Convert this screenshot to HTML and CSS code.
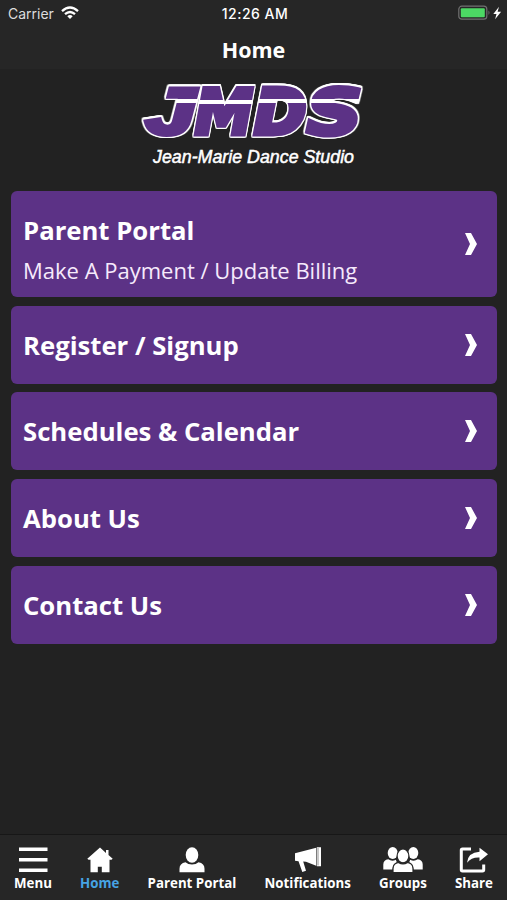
FILE: index.html
```html
<!DOCTYPE html>
<html lang="en">
<head>
<meta charset="utf-8">
<title>Home</title>
<link rel="stylesheet" href="styles.css">
</head>
<body>
<div class="status">
  <div class="carrier"><span>Carrier</span>
    <svg width="18" height="14" viewBox="0 0 18 14" fill="none" stroke="#fff" stroke-width="2.3"><path d="M1 5.1Q9-2.1 17 5.1M4 8.2Q9 3.8 14 8.2"/><path d="M9 13L6.300 10.200Q9 8 11.700 10.200Z" fill="#fff" stroke="none"/></svg>
  </div>
  <span class="time">12:26 AM</span>
  <div class="power">
    <svg width="44" height="16" viewBox="0 0 44 16"><rect x=".8" y="1.200" width="28" height="13" rx="3" fill="none" stroke="#717171" stroke-width="1.200"/><rect x="2.800" y="3.200" width="24" height="9" rx="1" fill="#4cd964"/><path d="M30.500 5.500q2 2.200 0 4.500z" fill="#717171"/><path d="M41 1.800L35.300 8.900h3.200l-1.400 5.400 6-7.500h-3.500z" fill="#fff"/></svg>
  </div>
</div>
<header class="title">Home</header>
<div class="logo">
  <svg width="240" height="96" viewBox="135 75 240 96">
    <defs><linearGradient id="band" gradientUnits="userSpaceOnUse" x1="0" y1="-50" x2="0" y2="0"><stop offset=".31" stop-color="#5c3286"/><stop offset=".31" stop-color="#fff"/><stop offset=".39" stop-color="#fff"/><stop offset=".39" stop-color="#5c3286"/></linearGradient></defs>
    <g class="mark" fill="url(#band)" stroke="url(#band)">
      <text class="hook" transform="translate(146 134) scale(1.350 1)">J</text>
      <text transform="translate(195 134) scale(.94 1)">M</text>
      <text transform="translate(254 134) scale(1.020 1)">D</text>
      <text transform="translate(307 134) scale(1.230 1)">S</text>
    </g>
    <text class="studio" x="153" y="162.500" textLength="201" lengthAdjust="spacingAndGlyphs">Jean-Marie Dance Studio</text>
  </svg>
</div>
<main class="cards">
  <a class="card tall"><div><h2>Parent Portal</h2><p>Make A Payment / Update Billing</p></div><svg class="chev" viewBox="0 0 12 22"><path d="M0 0h6l6 11-6 11H0l5-11z"/></svg></a>
  <a class="card"><h2>Register / Signup</h2><svg class="chev" viewBox="0 0 12 22"><path d="M0 0h6l6 11-6 11H0l5-11z"/></svg></a>
  <a class="card"><h2>Schedules &amp; Calendar</h2><svg class="chev" viewBox="0 0 12 22"><path d="M0 0h6l6 11-6 11H0l5-11z"/></svg></a>
  <a class="card"><h2>About Us</h2><svg class="chev" viewBox="0 0 12 22"><path d="M0 0h6l6 11-6 11H0l5-11z"/></svg></a>
  <a class="card"><h2>Contact Us</h2><svg class="chev" viewBox="0 0 12 22"><path d="M0 0h6l6 11-6 11H0l5-11z"/></svg></a>
</main>
<nav class="tabs">
  <a class="tab"><svg width="30" height="26" viewBox="0 0 30 26"><path d="M1 .5h28.500v3.600H1zM1 11h28.500v3.600H1zM1 21.500h28.500v3.600H1z"/></svg><span>Menu</span></a>
  <a class="tab active"><svg width="26" height="26" viewBox="0 0 26 26"><path d="M13 .5L.3 11.800l1.200 1H3.500V25.300h7.300v-5.500h4v5.500h7.700V12.800h2l1.200-1-4.200-3.700V3h-2.500v3z"/></svg><span>Home</span></a>
  <a class="tab"><svg width="26" height="26" viewBox="0 0 26 26"><ellipse cx="13" cy="8" rx="6.300" ry="7.700"/><path d="M.5 25.300v-3.500q0-5.500 6-6.500 2.500 2.200 6.500 2.200t6.500-2.200q6 1 6 6.500v3.500z"/></svg><span>Parent Portal</span></a>
  <a class="tab"><svg width="28" height="26" viewBox="0 0 28 26"><path d="M1 6.200L22.200 .8v18L12 14.800 9.200 14.500 12 23.700l-3.700 1.400L4.500 14.300 1 13.800zM22.800 .3h4.200v19h-4.200z"/><path d="M24 1v17.500" stroke="#777" stroke-width=".8"/></svg><span>Notifications</span></a>
  <a class="tab"><svg width="40" height="26" viewBox="0 0 40 26"><ellipse cx="9.700" cy="6" rx="5" ry="6"/><ellipse cx="30.300" cy="6" rx="5" ry="6"/><path d="M.3 22.500v-5q0-4.500 5-5.200 3.500 2.500 7.500 .5l1 2.500q-4 1.500-4.300 7.200zM39.700 22.500v-5q0-4.500-5-5.200-3.500 2.500-7.500 .5l-1 2.500q4 1.500 4.300 7.200z"/><ellipse class="cut" cx="20" cy="8.900" rx="5.900" ry="6.900"/><path class="cut" d="M10 25.700v-3.900q0-5.500 5.500-6.300 4.500 3 9 0 5.500 .8 5.500 6.300v3.900z"/></svg><span>Groups</span></a>
  <a class="tab"><svg width="30" height="26" viewBox="0 0 30 26"><path d="M12 1.900H3.500q-1.200 0-1.200 1.200v19.600q0 1.200 1.200 1.200h20q1.200 0 1.200-1.200V17.500" fill="none" stroke="#fff" stroke-width="3"/><path d="M8 15.800Q9 5.300 20.500 4.800V.8L29 7.300l-8.500 7V10.500Q12.500 10 8 15.800z"/></svg><span>Share</span></a>
</nav>
</body>
</html>
```
FILE: styles.css
```css
* { box-sizing: border-box; margin: 0; padding: 0; }
body {
  height: 900px;
  display: flex;
  flex-direction: column;
  overflow: hidden;
  background: #222;
  color: #fff;
  font-family: "Open Sans", sans-serif;
  white-space: nowrap;
}
svg { display: block; flex: none; overflow: visible; }
.status {
  height: 28px;
  flex: none;
  display: grid;
  grid-template-columns: 1fr auto 1fr;
  align-items: center;
  padding: 0 5px 2px 8px;
  background: #262626;
  font: 14px Inter, sans-serif;
}
.carrier { display: flex; align-items: center; gap: 7px; color: #ddd; }
.time { font-weight: 500; letter-spacing: .5px; }
.power { justify-self: end; }
.title {
  height: 41px;
  flex: none;
  line-height: 44px;
  text-align: center;
  font-weight: 700;
  font-size: 21.500px;
  background: #262626;
}
.logo { height: 122px; flex: none; padding: 6px 0 0 135px; }
.mark text {
  font: italic 700 62px "DejaVu Sans", sans-serif;
  stroke-width: 5px;
  filter: drop-shadow(1px 0 0 #fff) drop-shadow(-1px 0 0 #fff) drop-shadow(0 1.200px 0 #fff) drop-shadow(0 -1.200px 0 #fff);
}
.mark .hook { font: italic 700 65px "Liberation Sans", sans-serif; }
.studio {
  font: italic 400 18px "Liberation Sans", sans-serif;
  fill: #fff;
  stroke: #fff;
  stroke-width: .5px;
}
.cards {
  flex: 1;
  display: flex;
  flex-direction: column;
  gap: 8.700px;
  padding: 0 10px 0 11px;
}
.card {
  height: 78px;
  flex: none;
  display: flex;
  align-items: center;
  justify-content: space-between;
  padding: 0 20px 0 12px;
  border-radius: 6px;
  background: #5c3286;
}
.card.tall { height: 106px; }
h2 { font-size: 25.700px; line-height: 36px; font-weight: 700; padding-top: 2px; }
.tall h2 { padding-top: 10px; }
p { font-size: 22px; line-height: 30px; margin-top: 6px; color: #f6eafc; }
.chev { width: 12px; height: 22px; fill: #fff; }
.tabs {
  height: 66px;
  flex: none;
  display: flex;
  justify-content: space-between;
  padding: 12px 14px 0 14px;
  border-top: 1px solid #171717;
  background: #262626;
}
.tab { display: flex; flex-direction: column; align-items: center; fill: #fff; }
.tab span { font-size: 13.300px; line-height: 21px; font-weight: 700; }
.active span { color: #46a3e4; }
.cut { stroke: #262626; stroke-width: 1.200px; }
```
